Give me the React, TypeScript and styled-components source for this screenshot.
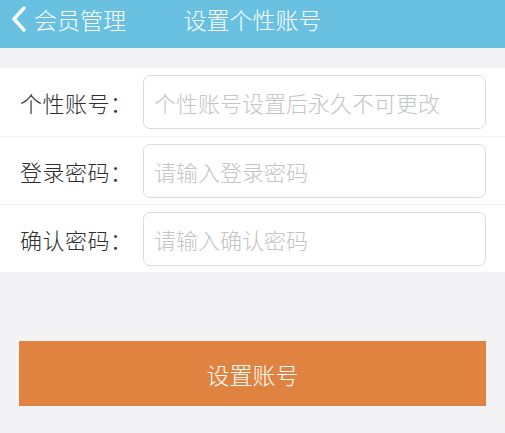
import React, { useState } from "react";
import styled, { createGlobalStyle } from "styled-components";

const GlobalStyle = createGlobalStyle`
    html, body {
        margin: 0;
        padding: 0;
        background: #f3f3f5;
        font-family: "Noto Sans CJK SC", "Noto Sans", sans-serif;
    }
`;

const Page = styled.div`
    width: 505px;
    height: 433px;
    background: #f3f3f5;
    overflow: hidden;
`;

const Header = styled.header`
    position: relative;
    height: 48px;
    background: #69c1e1;
    display: flex;
    align-items: flex-start;
    color: #fff;
`;

const BackButton = styled.div`
    display: flex;
    align-items: center;
    gap: 6px;
    padding: 5px 0 0 10px;
    font-size: 23px;
    font-weight: 300;
    line-height: 28px;
    cursor: pointer;
`;

const Title = styled.div`
    position: absolute;
    left: 0;
    right: 0;
    top: 5px;
    text-align: center;
    font-size: 23px;
    font-weight: 300;
    line-height: 28px;
    pointer-events: none;
`;

const Form = styled.form`
    margin-top: 20px;
    background: #fff;
`;

const Row = styled.div`
    display: flex;
    align-items: center;
    height: 68px;
    padding: 0 19px 0 20px;
    box-sizing: border-box;

    & + & {
        border-top: 1px solid #f0f0f2;
    }
`;

const Label = styled.label`
    width: 123px;
    flex-shrink: 0;
    font-size: 22px;
    font-weight: 300;
    color: #2e2e2e;
    letter-spacing: 0.5px;
`;

const Field = styled.input`
    flex: 1;
    height: 54px;
    box-sizing: border-box;
    border: 1px solid #dcdcdc;
    border-radius: 7px;
    padding: 0 10px;
    font-family: inherit;
    font-size: 22px;
    font-weight: 300;
    color: #333;
    outline: none;
    background: #fff;

    &::placeholder {
        color: #c4c4c6;
    }
`;

const Submit = styled.button`
    display: block;
    margin: 69px 19px 0 19px;
    width: calc(100% - 38px);
    height: 65px;
    border: none;
    background: #e08240;
    color: #fff;
    font-family: inherit;
    font-size: 23px;
    font-weight: 300;
    cursor: pointer;
`;

const Chevron = () => (
    <svg width="18" height="26" viewBox="0 0 18 26" fill="none">
        <path d="M14 2 L4 13 L14 24" stroke="#fff" strokeWidth="3.4" strokeLinecap="round" strokeLinejoin="round" />
    </svg>
);

const App: React.FC = () => {
    const [account, setAccount] = useState("");
    const [password, setPassword] = useState("");
    const [confirm, setConfirm] = useState("");

    return (
        <Page>
            <GlobalStyle />
            <Header>
                <BackButton>
                    <Chevron />
                    会员管理
                </BackButton>
                <Title>设置个性账号</Title>
            </Header>
            <Form onSubmit={(e) => e.preventDefault()}>
                <Row>
                    <Label>个性账号：</Label>
                    <Field placeholder="个性账号设置后永久不可更改" value={account} onChange={(e) => setAccount(e.target.value)} />
                </Row>
                <Row>
                    <Label>登录密码：</Label>
                    <Field type="password" placeholder="请输入登录密码" value={password} onChange={(e) => setPassword(e.target.value)} />
                </Row>
                <Row>
                    <Label>确认密码：</Label>
                    <Field type="password" placeholder="请输入确认密码" value={confirm} onChange={(e) => setConfirm(e.target.value)} />
                </Row>
            </Form>
            <Submit type="button">设置账号</Submit>
        </Page>
    );
};

export default App;
